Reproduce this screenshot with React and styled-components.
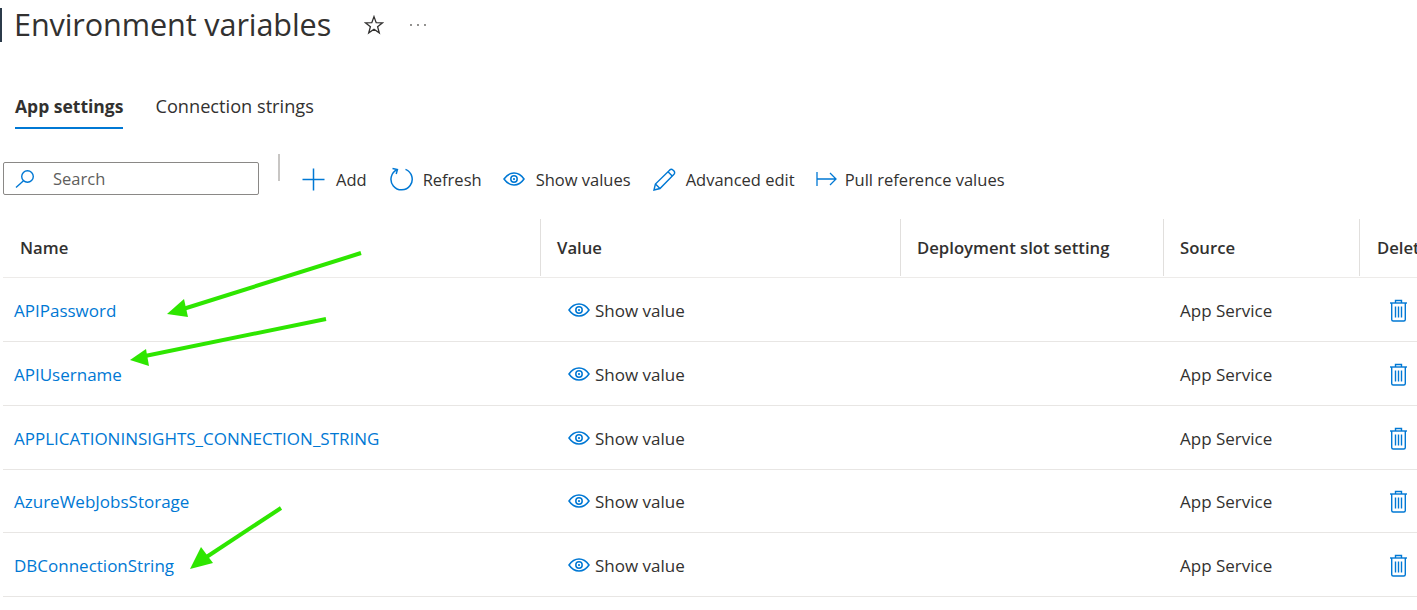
import React from "react";
import styled, { createGlobalStyle } from "styled-components";

const Global = createGlobalStyle`
  html, body { margin: 0; padding: 0; background: #fff; }
  body { font-family: "Open Sans", "Noto Sans", "Liberation Sans", sans-serif; color: #323130; overflow: hidden; }
  #root { width: 1417px; height: 610px; overflow: hidden; }
`;

const Page = styled.div`
  position: relative;
  width: 1417px;
  height: 610px;
  overflow: hidden;
`;

const TitleBar = styled.header`
  display: flex;
  align-items: center;
  height: 34px;
  padding-top: 8px;
`;

const TitleMark = styled.span`
  width: 2px;
  height: 34px;
  background: #2b3a4a;
  margin-right: 12px;
`;

const Title = styled.h1`
  margin: 0;
  font-size: 30.6px;
  font-weight: 400;
  letter-spacing: -0.1px;
  line-height: 34px;
  color: #323130;
  white-space: nowrap;
  position: relative;
  top: -1px;
`;

const TitleIcon = styled.span`
  display: flex;
  margin-left: ${(p) => p.$gap}px;
  color: #323130;
`;

const Tabs = styled.nav`
  display: flex;
  gap: 32px;
  margin: 49px 0 0 15px;
`;

const Tab = styled.div`
  font-size: ${(p) => (p.$active ? 17.5 : 18.2)}px;
  line-height: 24px;
  height: 38px;
  padding-top: 3px;
  box-sizing: border-box;
  border-bottom: ${(p) => (p.$active ? "2px solid #0078d4" : "2px solid transparent")};
  font-weight: ${(p) => (p.$active ? 700 : 400)};
  color: #323130;
  white-space: nowrap;
`;

const Toolbar = styled.div`
  display: flex;
  align-items: flex-start;
  margin: 25px 0 0 3px;
  height: 65px;
`;

const SearchBox = styled.div`
  display: flex;
  align-items: center;
  width: 256px;
  height: 33px;
  box-sizing: border-box;
  border: 1px solid #8a8886;
  border-radius: 2px;
  margin-top: 8px;
  padding-left: 10px;
  font-size: 16px;
  color: #605e5c;
`;

const SearchLabel = styled.span`
  margin-left: 17px;
  font-size: 16.5px;
`;

const Divider = styled.span`
  width: 2px;
  height: 27px;
  background: #c8c6c4;
  margin: 0 22px 0 19px;
`;

const Command = styled.div`
  display: flex;
  align-items: center;
  height: 34px;
  margin-top: 8px;
  margin-right: ${(p) => p.$mr}px;
  font-size: 16.5px;
  color: #323130;
  white-space: nowrap;
`;

const CommandIcon = styled.span`
  display: flex;
  margin-right: ${(p) => p.$gap}px;
  color: #0078d4;
`;

const Table = styled.div`
  margin-left: 3px;
  width: 1414px;
`;

const gridCols = "538px 360px 263px 196px 1fr";

const HeaderRow = styled.div`
  display: grid;
  grid-template-columns: ${gridCols};
  height: 58px;
  border-bottom: 1px solid #edebe9;
`;

const HeaderCell = styled.div`
  display: flex;
  align-items: center;
  padding-left: ${(p) => (p.$first ? 17 : p.$last ? 17 : 16)}px;
  font-size: 16.7px;
  font-weight: 600;
  color: #323130;
  white-space: nowrap;
  overflow: hidden;
  border-right: ${(p) => (p.$last ? "none" : "1px solid #e1dfdd")};
  height: 57px;
`;

const Row = styled.div`
  display: grid;
  grid-template-columns: ${gridCols};
  height: ${(p) => p.$h}px;
  box-sizing: border-box;
  padding-top: 1px;
  border-bottom: 1px solid #e8e6e4;
  align-items: center;
  font-size: 17px;
`;

const NameLink = styled.a`
  padding-left: 11px;
  color: #0078d4;
  white-space: nowrap;
`;

const ValueCell = styled.div`
  display: flex;
  align-items: center;
  padding-left: 27px;
  color: #323130;
`;

const ValueIcon = styled.span`
  display: flex;
  margin-right: 5px;
  color: #0078d4;
`;

const SourceCell = styled.div`
  padding-left: 16px;
  color: #323130;
`;

const DeleteCell = styled.div`
  display: flex;
  padding-left: 29px;
  color: #0078d4;
`;

const Arrows = styled.svg`
  position: absolute;
  inset: 0;
  pointer-events: none;
`;

const Eye = ({ w = 22 }) => (
  <svg width={w} height={w * 0.64} viewBox="0 0 22 14" fill="none" stroke="currentColor" strokeWidth="1.5">
    <path d="M1 7 C4 2.6 7.5 1 11 1 S18 2.6 21 7 C18 11.4 14.5 13 11 13 S4 11.4 1 7 Z" />
    <circle cx="11" cy="7" r="3.2" />
    <circle cx="11" cy="7" r="1.1" fill="currentColor" stroke="none" />
  </svg>
);

const Trash = () => (
  <svg width="19" height="23" viewBox="0 0 19 23" fill="none" stroke="currentColor" strokeWidth="1.4">
    <path d="M1 4 H18" />
    <path d="M6.5 4 V1.5 H12.5 V4" />
    <path d="M2.7 4 V20.5 Q2.7 22 4.2 22 H14.8 Q16.3 22 16.3 20.5 V4" />
    <path d="M6.5 7.5 V18.5 M9.5 7.5 V18.5 M12.5 7.5 V18.5" />
  </svg>
);

const rows = [
  { name: "APIPassword", h: 64 },
  { name: "APIUsername", h: 64 },
  { name: "APPLICATIONINSIGHTS_CONNECTION_STRING", h: 64 },
  { name: "AzureWebJobsStorage", h: 63 },
  { name: "DBConnectionString", h: 64 },
];

const heads = ["Name", "Value", "Deployment slot setting", "Source", "Delete"];

export default function App() {
  return (
    <Page>
      <Global />
      <TitleBar>
        <TitleMark />
        <Title>Environment variables</Title>
        <TitleIcon $gap={33}>
          <svg width="20" height="20" viewBox="0 0 20 20" fill="none" stroke="currentColor" strokeWidth="1.3" strokeLinejoin="miter">
            <path d="M10 1.6 L12.2 7.6 L18.6 7.8 L13.6 11.7 L15.3 17.9 L10 14.3 L4.7 17.9 L6.4 11.7 L1.4 7.8 L7.8 7.6 Z" />
          </svg>
        </TitleIcon>
        <TitleIcon $gap={25}>
          <svg width="18" height="4" viewBox="0 0 18 4" fill="#605e5c">
            <circle cx="2" cy="2" r="0.9" />
            <circle cx="9" cy="2" r="0.9" />
            <circle cx="16" cy="2" r="0.9" />
          </svg>
        </TitleIcon>
      </TitleBar>

      <Tabs>
        <Tab $active>App settings</Tab>
        <Tab>Connection strings</Tab>
      </Tabs>

      <Toolbar>
        <SearchBox>
          <svg width="22" height="20" viewBox="0 0 22 20" fill="none" stroke="#0078d4" strokeWidth="1.4">
            <circle cx="13.5" cy="7.5" r="5.8" />
            <path d="M9.5 11.8 L2 18.5" />
          </svg>
          <SearchLabel>Search</SearchLabel>
        </SearchBox>
        <Divider />
        <Command $mr={22}>
          <CommandIcon $gap={11}>
            <svg width="23" height="23" viewBox="0 0 23 23" stroke="currentColor" strokeWidth="1.5">
              <path d="M11.5 0.5 V22.5 M0.5 11.5 H22.5" />
            </svg>
          </CommandIcon>
          Add
        </Command>
        <Command $mr={21}>
          <CommandIcon $gap={10}>
            <svg width="24" height="24" viewBox="0 0 24 24" fill="none" stroke="currentColor" strokeWidth="1.5">
              <path d="M8.2 2.6 A10.6 10.6 0 1 0 16.5 2.4" />
              <path d="M3.5 1.4 L8.4 2.6 L7.2 7" />
            </svg>
          </CommandIcon>
          Refresh
        </Command>
        <Command $mr={22}>
          <CommandIcon $gap={11}>
            <Eye w={22} />
          </CommandIcon>
          Show values
        </Command>
        <Command $mr={21}>
          <CommandIcon $gap={10}>
            <svg width="23" height="23" viewBox="0 0 23 23" fill="none" stroke="currentColor" strokeWidth="1.4">
              <path d="M1 22 L2.4 16 L16.8 1.9 Q18.3 0.6 20.2 2.2 L21 3 Q22.3 4.8 21 6.2 L7 20.5 Z" />
              <path d="M15 3.8 L19.2 8 M2.4 16 L7 20.5" />
            </svg>
          </CommandIcon>
          Advanced edit
        </Command>
        <Command $mr={0}>
          <CommandIcon $gap={8}>
            <svg width="21" height="16" viewBox="0 0 21 16" fill="none" stroke="currentColor" strokeWidth="1.3">
              <path d="M1 1 V15 M1 8 H20 M14 2 L20 8 L14 14" />
            </svg>
          </CommandIcon>
          Pull reference values
        </Command>
      </Toolbar>

      <Table>
        <HeaderRow>
          {heads.map((h, i) => (
            <HeaderCell key={h} $first={i === 0} $last={i === heads.length - 1}>
              {h}
            </HeaderCell>
          ))}
        </HeaderRow>
        {rows.map((r) => (
          <Row key={r.name} $h={r.h}>
            <NameLink>{r.name}</NameLink>
            <ValueCell>
              <ValueIcon>
                <Eye w={22} />
              </ValueIcon>
              Show value
            </ValueCell>
            <div />
            <SourceCell>App Service</SourceCell>
            <DeleteCell>
              <Trash />
            </DeleteCell>
          </Row>
        ))}
      </Table>

      <Arrows width="1417" height="610" viewBox="0 0 1417 610">
        <g stroke="#2ee600" strokeWidth="4" fill="#2ee600">
          <path d="M361 253 L180 310" fill="none" />
          <path d="M326 319 L145 356" fill="none" />
          <path d="M281 508 L205 558" fill="none" />
        </g>
        <g fill="#2ee600">
          <path d="M167 314 L184 299 L188 317 Z" />
          <path d="M130 360 L146 349 L149 366 Z" />
          <path d="M190 569 L201 547 L213 563 Z" />
        </g>
      </Arrows>
    </Page>
  );
}
